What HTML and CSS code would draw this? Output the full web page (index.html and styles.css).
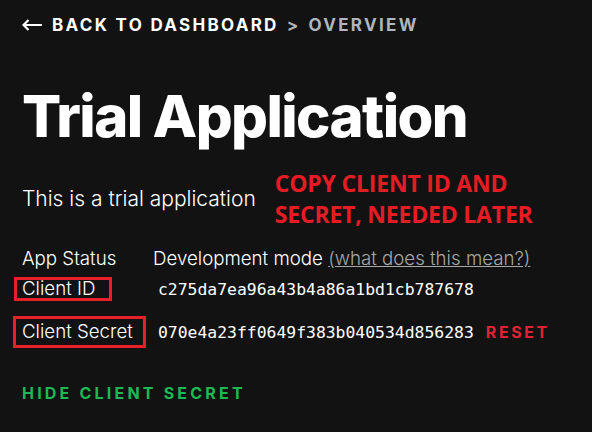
FILE: index.html
```html
<!DOCTYPE html>
<html>
<head>
<meta charset="utf-8">
<link rel="stylesheet" href="styles.css">
</head>
<body>
<div class="page">
  <nav class="crumbs">
    <svg class="arrow" width="20" height="12" viewBox="0 0 20 12" aria-hidden="true"><path d="M1 6H20M6.5 1L1.5 6L6.5 11" fill="none" stroke="#ffffff" stroke-width="2.2"/></svg>
    <span class="back">BACK TO DASHBOARD</span>
    <span class="sep">&gt;</span>
    <span class="current">OVERVIEW</span>
  </nav>
  <h1 class="title">Trial Application</h1>
  <div class="intro">
    <p class="desc">This is a trial application</p>
    <p class="note">COPY CLIENT ID AND<br>SECRET, NEEDED LATER</p>
  </div>
  <div class="info">
    <div class="row row-status">
      <span class="label">App Status</span>
      <span class="value-text">Development mode <a class="help" href="#">(what does this mean?)</a></span>
    </div>
    <div class="row row-id">
      <span class="label boxed boxed-id">Client ID</span>
      <span class="code">c275da7ea96a43b4a86a1bd1cb787678</span>
    </div>
    <div class="row row-secret">
      <span class="label boxed boxed-secret">Client Secret</span>
      <span class="code">070e4a23ff0649f383b040534d856283</span>
      <a class="reset" href="#">RESET</a>
    </div>
  </div>
  <a class="hide" href="#">HIDE CLIENT SECRET</a>
</div>
</body>
</html>
```
FILE: styles.css
```css
html, body {
  margin: 0;
  padding: 0;
  background: #121212;
}
body {
  font-family: "Inter", "Noto Sans", sans-serif;
  color: #ffffff;
}
.page {
  display: flex;
  flex-direction: column;
  align-items: flex-start;
  padding: 13px 22px 0 22px;
}
.crumbs {
  font-weight: 700;
  font-size: 17px;
  line-height: 24px;
  letter-spacing: 2.3px;
  display: flex;
  align-items: center;
  gap: 8px;
}
.crumbs .arrow {
  margin-right: 2px;
}
.crumbs .sep {
  color: #b3b3b3;
}
.crumbs .current {
  color: #b0b6be;
}
.title {
  margin: 47px 0 0 0;
  font-size: 58px;
  line-height: 64px;
  font-weight: 800;
  letter-spacing: -1.6px;
}
.intro {
  margin-top: 20px;
  display: flex;
  align-items: center;
  gap: 19px;
}
.desc {
  margin: 0;
  font-size: 21px;
  line-height: 30px;
  font-weight: 300;
  letter-spacing: 0;
}
.note {
  margin: 0;
  font-family: "Open Sans", sans-serif;
  font-weight: 700;
  font-size: 23px;
  line-height: 31px;
  letter-spacing: -0.2px;
  color: #e51c24;
}
.info {
  margin-top: 15px;
  display: flex;
  flex-direction: column;
}
.row {
  display: grid;
  grid-template-columns: 131px auto auto;
  align-items: center;
  font-size: 18.7px;
  font-weight: 300;
}
.row-status {
  height: 26px;
}
.row-id {
  margin-top: 6px;
}
.row-secret {
  margin-top: 15px;
}
.help {
  color: #a7a7a7;
  text-decoration: underline;
}
.boxed {
  justify-self: start;
  border: 3px solid #e8202a;
  margin-left: -8px;
  padding: 0 5px;
}
.boxed-id {
  line-height: 18px;
  padding-right: 14px;
}
.boxed-secret {
  line-height: 26px;
  margin-left: -9px;
  padding-left: 6px;
  padding-right: 10px;
}
.code {
  font-family: "DejaVu Sans Mono", monospace;
  font-size: 16.4px;
  font-weight: 400;
  padding-left: 5px;
  color: #ffffff;
}
.reset {
  margin-left: 12px;
  font-weight: 700;
  font-size: 16px;
  letter-spacing: 2.6px;
  color: #e22134;
  text-decoration: none;
}
.hide {
  margin-top: 35px;
  font-weight: 700;
  font-size: 16px;
  line-height: 20px;
  letter-spacing: 3.2px;
  color: #1db954;
  text-decoration: none;
}
```
